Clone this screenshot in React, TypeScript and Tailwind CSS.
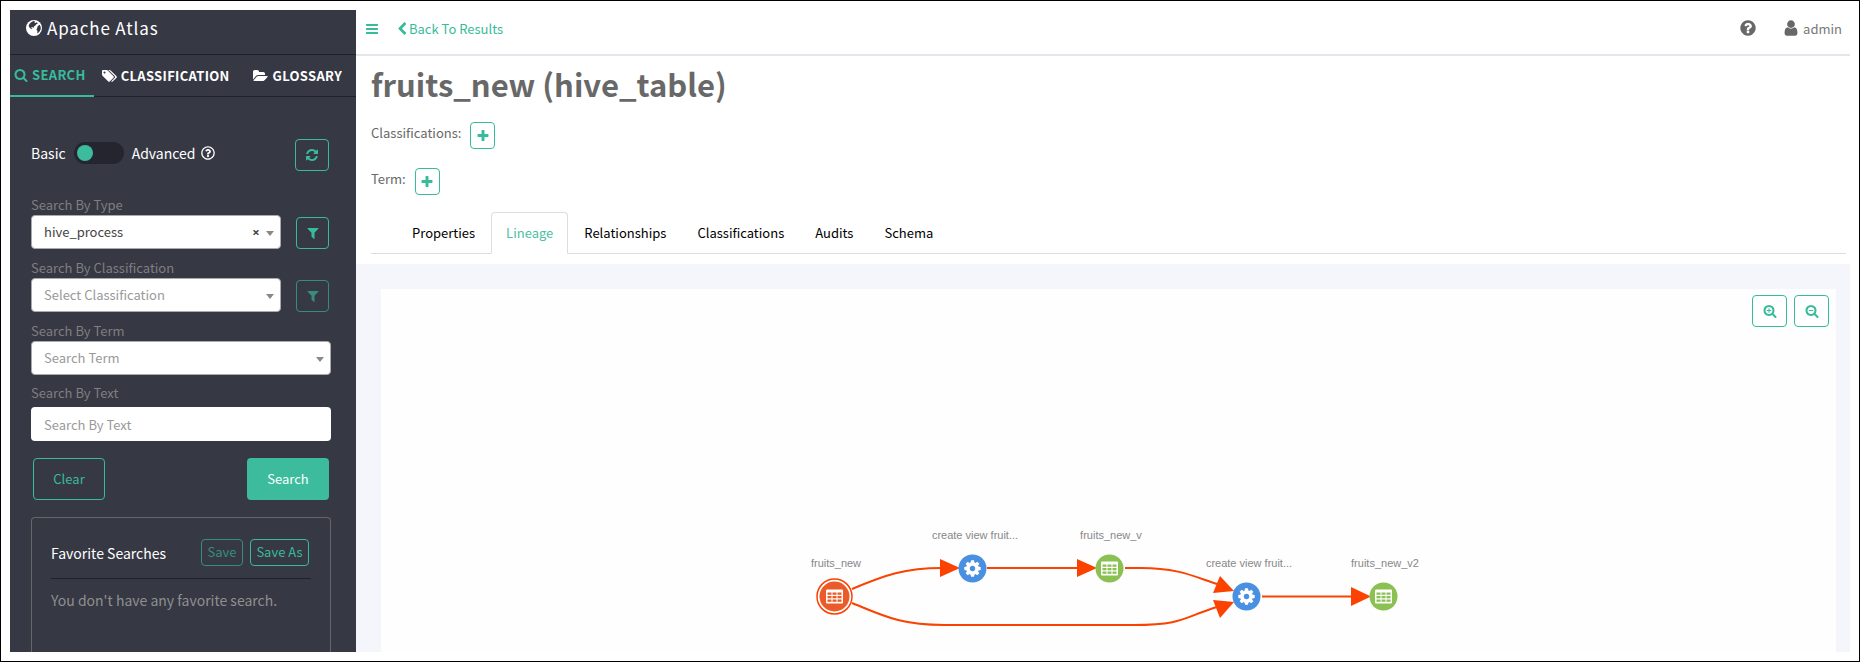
import React, { useState } from "react";
import clsx from "clsx";
import { FaRegQuestionCircle } from "react-icons/fa";

const SANS = "font-['Noto_Sans_CJK_SC','Noto_Sans',sans-serif]";

// Font Awesome 4 outlines, drawn on a 1792 grid
const icons = {
    bars: "M1664 1344v128q0 26-19 45t-45 19h-1408q-26 0-45-19t-19-45v-128q0-26 19-45t45-19h1408q26 0 45 19t19 45zm0-512v128q0 26-19 45t-45 19h-1408q-26 0-45-19t-19-45v-128q0-26 19-45t45-19h1408q26 0 45 19t19 45zm0-512v128q0 26-19 45t-45 19h-1408q-26 0-45-19t-19-45v-128q0-26 19-45t45-19h1408q26 0 45 19t19 45z",
    search: "M1216 832q0-185-131.5-316.5t-316.5-131.5-316.5 131.5-131.5 316.5 131.5 316.5 316.5 131.5 316.5-131.5 131.5-316.5zm512 832q0 52-38 90t-90 38q-54 0-90-38l-343-342q-179 124-399 124-143 0-273.5-55.5t-225-150-150-225-55.5-273.5 55.5-273.5 150-225 225-150 273.5-55.5 273.5 55.5 225 150 150 225 55.5 273.5q0 220-124 399l343 343q37 37 37 90z",
    plus: "M1600 736v192q0 40-28 68t-68 28h-416v416q0 40-28 68t-68 28h-192q-40 0-68-28t-28-68v-416h-416q-40 0-68-28t-28-68v-192q0-40 28-68t68-28h416v-416q0-40 28-68t68-28h192q40 0 68 28t28 68v416h416q40 0 68 28t28 68z",
    filter: "M1595 295q17 41-14 70l-493 493v742q0 42-39 59-13 5-25 5-27 0-45-19l-256-256q-19-19-19-45v-486l-493-493q-31-29-14-70 17-39 59-39h1280q42 0 59 39z",
    refresh: "M1639 1056q0 5-1 7-64 268-268 434.5t-478 166.5q-146 0-282.5-55t-243.5-157l-129 129q-19 19-45 19t-45-19-19-45v-448q0-26 19-45t45-19h448q26 0 45 19t19 45-19 45l-137 137q71 66 161 102t187 36q134 0 250-65t186-179q11-17 53-117 8-23 30-23h192q13 0 22.5 9.5t9.5 22.5zm25-800v448q0 26-19 45t-45 19h-448q-26 0-45-19t-19-45 19-45l138-138q-148-137-349-137-134 0-250 65t-186 179q-11 17-53 117-8 23-30 23h-199q-13 0-22.5-9.5t-9.5-22.5v-7q65-268 270-434.5t480-166.5q146 0 284 55.5t245 156.5l130-129q19-19 45-19t45 19 19 45z",
    chevronLeft: "M1427 301l-531 531 531 531q19 19 19 45t-19 45l-166 166q-19 19-45 19t-45-19l-742-742q-19-19-19-45t19-45l742-742q19-19 45-19t45 19l166 166q19 19 19 45t-19 45z",
    question: "M1024 1376v-192q0-14-9-23t-23-9h-192q-14 0-23 9t-9 23v192q0 14 9 23t23 9h192q14 0 23-9t9-23zm256-672q0-88-55.5-163t-138.5-116-170-41q-243 0-371 213-15 24 8 42l132 100q7 6 19 6 16 0 25-12 53-68 86-92 34-24 86-24 48 0 85.5 26t37.5 59q0 38-20 61t-68 45q-63 28-115.5 86.5t-52.5 125.5v36q0 14 9 23t23 9h192q14 0 23-9t9-23q0-19 21.5-49.5t54.5-49.5q32-18 49-28.5t46-35 44.5-48 28-60.5 12.5-81zm384 192q0 209-103 385.5t-279.5 279.5-385.5 103-385.5-103-279.5-279.5-103-385.5 103-385.5 279.5-279.5 385.5-103 385.5 103 279.5 279.5 103 385.5z",
    user: "M1536 1399q0 109-62.5 187t-150.5 78h-854q-88 0-150.5-78t-62.5-187q0-85 8.5-160.5t31.5-152 58.5-131 94-89 134.5-34.5q131 128 313 128t313-128q76 0 134.5 34.5t94 89 58.5 131 31.5 152 8.5 160.5zm-256-887q0 159-112.5 271.5t-271.5 112.5-271.5-112.5-112.5-271.5 112.5-271.5 271.5-112.5 271.5 112.5 112.5 271.5z",
    tags: "M448 448q0-53-37.5-90.5t-90.5-37.5-90.5 37.5-37.5 90.5 37.5 90.5 90.5 37.5 90.5-37.5 37.5-90.5zm1067 576q0 53-37 90l-491 492q-39 37-91 37-53 0-90-37l-715-716q-38-37-64.5-101t-26.5-117v-416q0-52 38-90t90-38h416q53 0 117 26.5t102 64.5l715 714q37 39 37 91zm384 0q0 53-37 90l-491 492q-39 37-91 37-36 0-59-14t-53-45l470-470q37-37 37-90 0-52-37-91l-715-714q-38-38-102-64.5t-117-26.5h224q53 0 117 26.5t102 64.5l715 714q37 39 37 91z",
    folder: "M1879 952q0 31-31 66l-336 396q-43 51-120.5 86.5t-143.5 35.5h-1088q-34 0-60.5-13t-26.5-43q0-31 31-66l336-396q43-51 120.5-86.5t143.5-35.5h1088q34 0 60.5 13t26.5 43zm-343-344v160h-832q-94 0-197 47.5t-164 119.5l-337 396-5 6q0-4-.5-12.5t-.5-12.5v-960q0-92 66-158t158-66h320q92 0 158 66t66 158v32h544q92 0 158 66t66 158z",
};

function Icon({ name, className }: { name: keyof typeof icons; className: string }) {
    const wide = name === "tags" || name === "folder";
    return (
        <svg className={clsx("shrink-0 fill-current", className)} viewBox={wide ? "0 0 1920 1792" : "0 0 1792 1792"} aria-hidden="true">
            <path d={icons[name]} />
        </svg>
    );
}

function ZoomIcon({ plus }: { plus?: boolean }) {
    return (
        <svg className="h-3.5 w-3.5 fill-current" viewBox="0 0 1792 1792" aria-hidden="true">
            <path d={icons.search} />
            <path d="M480 768h576v128h-576z" />
            {plus && <path d="M704 544h128v576h-128z" />}
        </svg>
    );
}

function Globe() {
    return (
        <svg className="h-4 w-4 shrink-0" viewBox="0 0 16 16" aria-hidden="true">
            <circle cx="8" cy="8" r="8" fill="#fff" />
            <path fill="#363844" d="M5.2 2.2 7.4 1l1.8.4-.9 1.2 1.3.5.8-.9 1.6 1.1-1.6 1-1 1.3-1.5 1 .2 1.2L5.9 7l-.8 1 1.5.8L5.8 9.300 3.800 8 2.600 5.800l1-2zM11.800 6l1.800-1.200 1 2 .2 2-.9 2.200-1.300 1.400-1.400 1.200.3-2.400-1-1.400z" />
        </svg>
    );
}

function Caret() {
    return (
        <svg className="pointer-events-none absolute top-4 right-[7px] h-[5px] w-2" viewBox="0 0 8 5" aria-hidden="true">
            <path d="M0 0h8L4 5z" fill="#888" />
        </svg>
    );
}

type PickerProps = { id: string; label: string; placeholder: string; options?: string[]; value?: string; filter?: "on" | "off" };

function Picker({ id, label, placeholder, options = [], value = "", filter }: PickerProps) {
    const [picked, setPicked] = useState(value);

    return (
        <div className="mb-[9px]">
            <label htmlFor={id} className="block h-5 text-[13px] leading-5 text-[#7f7f80]">{label}</label>
            <div className="flex items-end justify-between pr-0.5">
                <div className={clsx("relative", filter ? "w-[250px]" : "-mr-0.5 flex-1")}>
                    <select
                        id={id}
                        value={picked}
                        onChange={(e) => setPicked(e.target.value)}
                        className={clsx(
                            "block h-[34px] w-full appearance-none rounded-sm border border-[#aaa] bg-white pl-3 text-[13px]",
                            picked ? "text-[#444]" : "text-[#999]"
                        )}
                    >
                        <option value="">{placeholder}</option>
                        {options.map((o) => <option key={o} value={o}>{o}</option>)}
                    </select>
                    {picked && (
                        <button type="button" aria-label="Clear selection" onClick={() => setPicked("")} className="absolute top-[9px] right-[19px] h-4 w-3 font-['Open_Sans',sans-serif] text-[13px] leading-4 font-bold text-[#444]">×</button>
                    )}
                    <Caret />
                </div>
                {filter && (
                    <button
                        type="button"
                        aria-label={`Filter ${label}`}
                        disabled={filter === "off"}
                        className="flex h-8 w-[33px] items-center justify-center rounded border border-[#38bb9b] text-[#38bb9b] disabled:opacity-65"
                    >
                        <Icon name="filter" className="h-3.5 w-3.5" />
                    </button>
                )}
            </div>
        </div>
    );
}

const sideTabs = [
    { label: "SEARCH", icon: "search", size: "h-3.5 w-3.5", place: "-mb-px border-b-2 border-[#38bb9b] pr-2 pl-1 text-[#38bb9b]" },
    { label: "CLASSIFICATION", icon: "tags", size: "h-3.5 w-[15px]", place: "ml-2" },
    { label: "GLOSSARY", icon: "folder", size: "h-3.5 w-[15px]", place: "ml-auto" },
] as const;

function Sidebar() {
    return (
        <aside className="flex w-[346px] shrink-0 flex-col overflow-hidden bg-[#363844] text-white">
            <div className="flex h-[45px] shrink-0 items-center gap-[5px] border-b border-[#20212d] pb-2 pl-4">
                <Globe />
                <span className="text-[17px] leading-6 tracking-wider">Apache Atlas</span>
            </div>
            <nav className="flex h-[42px] shrink-0 border-b border-[#20212d] pr-3.5">
                {sideTabs.map((tab) => (
                    <a
                        key={tab.label}
                        href={`#${tab.label.toLowerCase()}`}
                        className={clsx("flex items-center gap-1 text-[13px] font-bold tracking-wide", tab.place)}
                    >
                        <Icon name={tab.icon} className={tab.size} />
                        {tab.label}
                    </a>
                ))}
            </nav>
            <form className="flex flex-1 flex-col pt-[42px] pr-[25px] pl-[21px]" onSubmit={(e) => e.preventDefault()}>
                <div className="mb-6 flex items-center justify-between pr-0.5">
                    <label className="flex items-center gap-2 pb-1 text-sm leading-5">
                        Basic
                        <input
                            type="checkbox"
                            className="h-[22px] w-[50px] appearance-none rounded-full bg-[#24252f] px-[3px] py-[3px] before:block before:h-4 before:w-4 before:rounded-full before:bg-[#3cbc9c] checked:before:ml-auto"
                        />
                        Advanced
                        <FaRegQuestionCircle className="-ml-0.5 h-3.5 w-3.5" />
                    </label>
                    <button type="button" aria-label="Refresh" className="flex h-8 w-[34px] items-center justify-center rounded border border-[#38bb9b] text-[#38bb9b]">
                        <Icon name="refresh" className="h-3.5 w-3.5" />
                    </button>
                </div>
                <Picker id="type" label="Search By Type" placeholder="Select Type" options={["hive_process"]} value="hive_process" filter="on" />
                <Picker id="classification" label="Search By Classification" placeholder="Select Classification" filter="off" />
                <Picker id="term" label="Search By Term" placeholder="Search Term" />
                <label htmlFor="text" className="block h-[23px] text-[13px] leading-[18px] text-[#7f7f80]">Search By Text</label>
                <input id="text" placeholder="Search By Text" className="h-[34px] shrink-0 rounded bg-white px-[13px] text-[13px] text-[#444] placeholder:text-[#999]" />
                <div className="mt-[17px] flex justify-between px-0.5">
                    <button type="button" className="h-[42px] w-[72px] rounded border border-[#38bb9b] text-[13px] text-[#38bb9b]">Clear</button>
                    <button type="submit" className="h-[42px] w-[82px] rounded bg-[#3cbc9c] text-[13px] text-white">Search</button>
                </div>
                <section className="mt-[17px] flex-1 rounded-t border border-b-0 border-[#666] px-[19px] pt-[21px]">
                    <div className="flex items-center gap-[7px] border-b border-[#20212d] pr-0.5 pb-3">
                        <h2 className="flex-1 text-sm leading-5">Favorite Searches</h2>
                        <button type="button" disabled className="h-[27px] w-[42px] rounded border border-[#38bb9b] pb-0.5 text-[13px] text-[#38bb9b] disabled:opacity-65">Save</button>
                        <button type="button" className="h-[27px] w-[59px] rounded border border-[#38bb9b] pb-0.5 text-[13px] text-[#38bb9b]">Save As</button>
                    </div>
                    <p className="mt-[11px] text-sm leading-5 text-[#8f8f90]">You don't have any favorite search.</p>
                </section>
            </form>
        </aside>
    );
}

const nodes = [
    { x: 35, y: 77, kind: "root", label: "fruits_new", labelX: 37 },
    { x: 173, y: 49, kind: "process", label: "create view fruit...", labelX: 176 },
    { x: 310, y: 49, kind: "table", label: "fruits_new_v", labelX: 312 },
    { x: 447, y: 77, kind: "process", label: "create view fruit...", labelX: 450 },
    { x: 584, y: 77, kind: "table", label: "fruits_new_v2", labelX: 586 },
];

const fills: Record<string, string> = { root: "#eb5a29", process: "#4a90e2", table: "#8bc152" };

function Grid({ cell }: { cell: string }) {
    return (
        <>
            <rect x="-8.500" y="-7" width="17" height="14" rx="1" fill="#fff" />
            {[-4, -0.500, 3].map((y) =>
                [-7, -2, 3].map((x) => <rect key={`${x}${y}`} x={x} y={y} width="4" height="2.300" fill={cell} />)
            )}
        </>
    );
}

function Cog() {
    return (
        <>
            <circle r="6.300" fill="#fff" />
            {[0, 45, 90, 135, 180, 225, 270, 315].map((a) => (
                <path key={a} d="M-2-5.6-1.5-8.2h3L2-5.6z" fill="#fff" transform={`rotate(${a})`} />
            ))}
            <circle r="2.700" fill="#4a90e2" />
        </>
    );
}

function Lineage() {
    return (
        <svg className="mx-auto mt-48 h-[133px] w-[619px] shrink-0 overflow-visible" viewBox="0 0 619 133" role="img" aria-label="Lineage of fruits_new">
            <g fill="none" stroke="#fb4200" strokeWidth="2">
                <path d="M53 70C86 56 106 49 143 49" />
                <path d="M53 84C83 96 100 106 145 106H335C385 106 385 98 418 88" />
                <path d="M188 49h92" />
                <path d="M326 49h16C380 49 396 58 418 65" />
                <path d="M463 77.500h92" />
            </g>
            <g fill="#fb4200">
                <path d="M141 40v18l20-9z" />
                <path d="M278 40v18l20-9z" />
                <path d="M421 57l-7 17 21-2z" />
                <path d="M414 81l7 18 14-16z" />
                <path d="M552 68v19l20-9.500z" />
            </g>
            {nodes.map((n) => (
                <g key={n.x} transform={`translate(${n.x + 0.5} ${n.y + 0.5})`}>
                    {n.kind === "root" && <circle r="17.500" fill="#fff" stroke="#fb4200" strokeWidth="1.500" />}
                    <circle r={n.kind === "root" ? 15 : 14} fill={fills[n.kind]} />
                    {n.kind === "process" ? <Cog /> : <Grid cell={fills[n.kind]} />}
                </g>
            ))}
            <g className="fill-[#888] font-['Liberation_Sans',sans-serif] text-[11px]" textAnchor="middle">
                {nodes.map((n) => <text key={n.x} x={n.labelX} y={n.y - 29}>{n.label}</text>)}
            </g>
        </svg>
    );
}

const tabs = ["Properties", "Lineage", "Relationships", "Classifications", "Audits", "Schema"];

const addButton = "flex h-[27px] w-[25px] items-center justify-center rounded border border-[#38bb9b] text-[#38bb9b]";

export default function App() {
    const [active, setActive] = useState("Lineage");

    return (
        <div className={clsx("flex h-screen min-h-[600px] border border-black bg-white p-[9px] text-[13px] leading-5 text-[#686868]", SANS)}>
            <Sidebar />
            <main className="flex min-w-0 flex-1 flex-col overflow-hidden">
                <header className="flex h-[46px] shrink-0 items-center border-b-2 border-[#e5e5eb] pr-2 pb-1.5 pl-[9px]">
                    <button type="button" aria-label="Toggle menu" className="text-[#38bb9b]"><Icon name="bars" className="h-3.5 w-3.5" /></button>
                    <a href="#results" className="ml-4 flex items-center text-[#38bb9b]">
                        <Icon name="chevronLeft" className="h-3.5 w-3.5" />
                        Back To Results
                    </a>
                    <button type="button" aria-label="Help" className="ml-auto pb-0.5"><Icon name="question" className="h-[18px] w-[18px]" /></button>
                    <button type="button" className="ml-6 flex items-center gap-0.5 text-[#777]">
                        <Icon name="user" className="h-5 w-5 pb-0.5 text-[#686868]" />
                        admin
                    </button>
                </header>
                <div className="pr-1 pl-[15px]">
                    <h1 className="mt-2 h-[46px] text-[31px] leading-10 font-bold">fruits_new (hive_table)</h1>
                    <div className="mt-3 flex h-[27px] items-center gap-[9px]">
                        <span className="pb-1.5">Classifications:</span>
                        <button type="button" aria-label="Add classification" className={addButton}><Icon name="plus" className="h-3.5 w-3.5" /></button>
                    </div>
                    <div className="mt-[19px] flex h-[27px] items-center gap-[9px]">
                        <span className="pb-1.5">Term:</span>
                        <button type="button" aria-label="Add term" className={addButton}><Icon name="plus" className="h-3.5 w-3.5" /></button>
                    </div>
                    <div role="tablist" className="mt-[17px] flex gap-px border-b border-[#ddd] pl-[26px]">
                        {tabs.map((t) => (
                            <button
                                key={t}
                                type="button"
                                role="tab"
                                aria-selected={t === active}
                                onClick={() => setActive(t)}
                                className={clsx(
                                    "-mb-px h-[42px] rounded-t border px-3.5",
                                    t === active ? "border-[#ddd] border-b-white bg-white text-[#4cc0a2]" : "border-transparent text-black"
                                )}
                            >
                                {t}
                            </button>
                        ))}
                    </div>
                </div>
                <div className="mt-2.5 flex min-h-0 flex-1 bg-[#f5f6fb] pt-[25px] pr-3.5 pl-[25px]">
                    <div className="flex flex-1 flex-col bg-[#fefefe]">
                        <div className="flex justify-end gap-[7px] pt-1.5 pr-[7px] text-[#38bb9b]">
                            <button type="button" aria-label="Zoom in" className="flex h-8 w-[35px] items-center justify-center rounded border border-[#38bb9b] bg-white"><ZoomIcon plus /></button>
                            <button type="button" aria-label="Zoom out" className="flex h-8 w-[35px] items-center justify-center rounded border border-[#38bb9b] bg-white"><ZoomIcon /></button>
                        </div>
                        <Lineage />
                    </div>
                </div>
            </main>
        </div>
    );
}
